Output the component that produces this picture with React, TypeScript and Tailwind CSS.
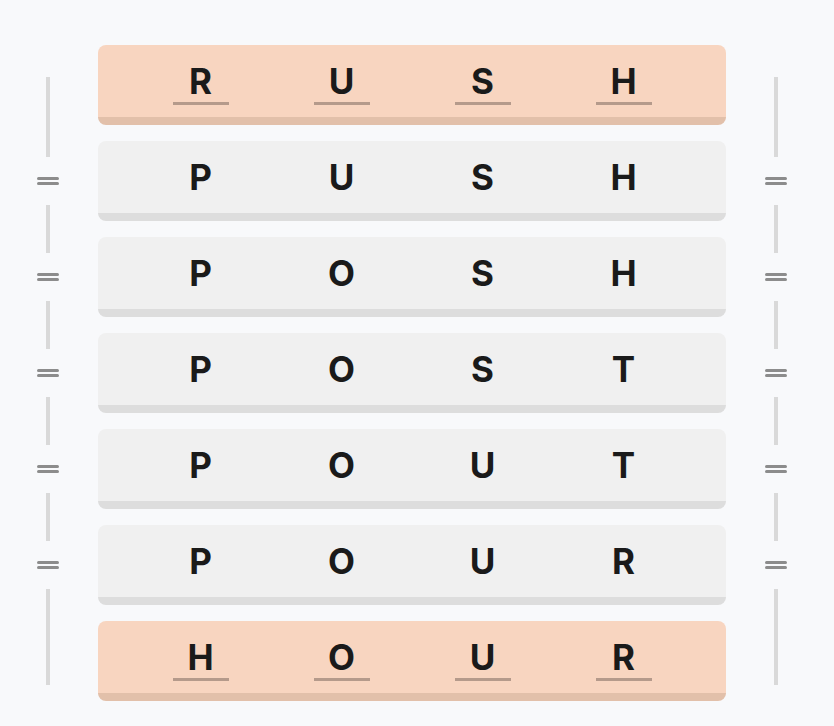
const rows = [
  { letters: ["R", "U", "S", "H"], end: true },
  { letters: ["P", "U", "S", "H"] },
  { letters: ["P", "O", "S", "H"] },
  { letters: ["P", "O", "S", "T"] },
  { letters: ["P", "O", "U", "T"] },
  { letters: ["P", "O", "U", "R"] },
  { letters: ["H", "O", "U", "R"], end: true },
];

// Double bar marking a one-letter step
const Equals = () => (
  <div className="flex flex-col gap-[2px] w-[22px]">
    <div className="h-[3px] bg-[#8c8c8c] rounded-sm" />
    <div className="h-[3px] bg-[#8c8c8c] rounded-sm" />
  </div>
);

const Rail = () => (
  <div className="w-[40px] flex flex-col items-center pt-8">
    <div className="w-1 h-[80px] bg-[#d9d9d9]" />
    {[0, 1, 2, 3, 4].map((i) => (
      <div key={i} className="flex flex-col items-center">
        <div className="my-5">
          <Equals />
        </div>
        <div className={`w-1 bg-[#d9d9d9] ${i === 4 ? "h-[96px]" : "h-[48px]"}`} />
      </div>
    ))}
  </div>
);

export default function App() {
  return (
    <div
      className="min-h-screen bg-[#f8f9fb] flex gap-[30px] pl-[28px] pt-[45px]"
      style={{ fontFamily: "Inter, 'Noto Sans', sans-serif" }}
    >
      <Rail />
      <div className="w-[628px] flex flex-col gap-4">
        {rows.map((row, r) => (
          <div
            key={r}
            className={`h-20 rounded-lg border-b-8 grid grid-cols-4 px-8 items-center ${
              row.end ? "bg-[#f8d5c0] border-[#e2c0aa]" : "bg-[#f0f0f0] border-[#dddddd]"
            }`}
          >
            {row.letters.map((ch, i) => (
              <div key={i} className="relative flex justify-center">
                <span className="text-[35px] leading-none font-bold text-[#1a1a1a]">{ch}</span>
                {row.end && (
                  <div className="absolute left-1/2 -translate-x-1/2 top-[38px] w-14 h-[3px] bg-[#b59a8b]" />
                )}
              </div>
            ))}
          </div>
        ))}
      </div>
      <Rail />
    </div>
  );
}
